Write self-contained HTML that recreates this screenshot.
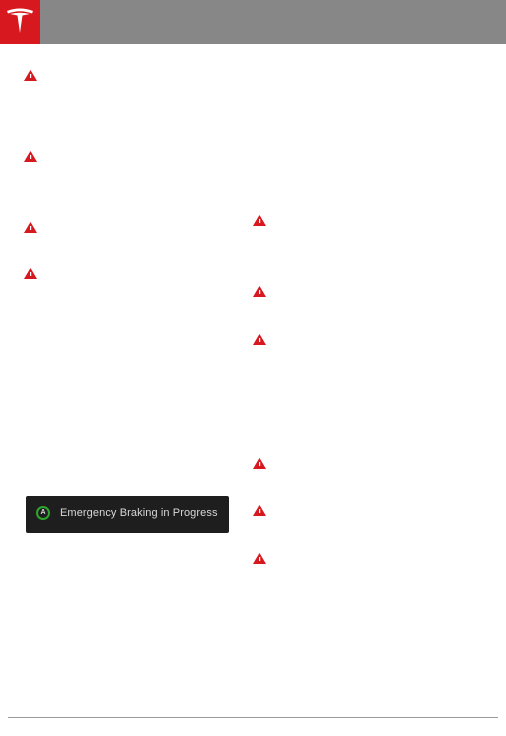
<!DOCTYPE html>
<html><head><style>
body{margin:0;width:506px;height:736px;background:#fff;position:relative;overflow:hidden;font-family:"Liberation Sans",sans-serif}
.hdr{position:absolute;left:0;top:0;width:506px;height:44px;background:#878787}
.red{position:absolute;left:0;top:0;width:40px;height:44px;background:#d7191f}
.w{position:absolute;width:13px;height:11px}
.ban{position:absolute;left:26px;top:496px;width:203px;height:37px;background:#1e1e1e;border-radius:2px}
.ban span{position:absolute;left:34px;top:11px;color:#d8d8d8;font-size:11px;letter-spacing:0.1px}
.ic{position:absolute;left:10px;top:10px;width:14px;height:14px;border:2px solid #2ea52e;border-radius:50%;box-sizing:border-box;color:#ddd;font-size:7px;font-weight:bold;text-align:center;line-height:10px}
.ft{position:absolute;left:8px;top:717px;width:490px;height:1px;background:#999}
</style></head><body>
<div class="hdr"></div>
<div class="red"><svg width="40" height="44" viewBox="0 0 40 44"><path d="M7 11 Q20 6 33 11 L32 13.5 Q20 9 8 13.5Z" fill="#fff"/><path d="M10 14 Q20 11.5 30 14 L22.5 15.5 L20 33 L17.5 15.5Z" fill="#fff"/></svg></div>
<svg class="w" style="left:24px;top:70px" viewBox="0 0 13 11"><path d="M6.5 0 L13 11 L0 11Z" fill="#d7191f"/><rect x="6" y="4" width="1.2" height="4" fill="#fff"/></svg>
<svg class="w" style="left:24px;top:151px" viewBox="0 0 13 11"><path d="M6.5 0 L13 11 L0 11Z" fill="#d7191f"/><rect x="6" y="4" width="1.2" height="4" fill="#fff"/></svg>
<svg class="w" style="left:24px;top:222px" viewBox="0 0 13 11"><path d="M6.5 0 L13 11 L0 11Z" fill="#d7191f"/><rect x="6" y="4" width="1.2" height="4" fill="#fff"/></svg>
<svg class="w" style="left:24px;top:268px" viewBox="0 0 13 11"><path d="M6.5 0 L13 11 L0 11Z" fill="#d7191f"/><rect x="6" y="4" width="1.2" height="4" fill="#fff"/></svg>
<svg class="w" style="left:253px;top:215px" viewBox="0 0 13 11"><path d="M6.5 0 L13 11 L0 11Z" fill="#d7191f"/><rect x="6" y="4" width="1.2" height="4" fill="#fff"/></svg>
<svg class="w" style="left:253px;top:286px" viewBox="0 0 13 11"><path d="M6.5 0 L13 11 L0 11Z" fill="#d7191f"/><rect x="6" y="4" width="1.2" height="4" fill="#fff"/></svg>
<svg class="w" style="left:253px;top:334px" viewBox="0 0 13 11"><path d="M6.5 0 L13 11 L0 11Z" fill="#d7191f"/><rect x="6" y="4" width="1.2" height="4" fill="#fff"/></svg>
<svg class="w" style="left:253px;top:458px" viewBox="0 0 13 11"><path d="M6.5 0 L13 11 L0 11Z" fill="#d7191f"/><rect x="6" y="4" width="1.2" height="4" fill="#fff"/></svg>
<svg class="w" style="left:253px;top:505px" viewBox="0 0 13 11"><path d="M6.5 0 L13 11 L0 11Z" fill="#d7191f"/><rect x="6" y="4" width="1.2" height="4" fill="#fff"/></svg>
<svg class="w" style="left:253px;top:553px" viewBox="0 0 13 11"><path d="M6.5 0 L13 11 L0 11Z" fill="#d7191f"/><rect x="6" y="4" width="1.2" height="4" fill="#fff"/></svg>
<div class="ban"><div class="ic">A</div><span>Emergency Braking in Progress</span></div>
<div class="ft"></div>
</body></html>
